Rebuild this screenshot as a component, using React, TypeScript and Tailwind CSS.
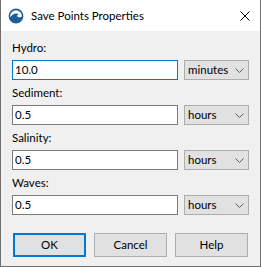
import { useState } from "react";

const FONT = { fontFamily: '"Segoe UI", Lato, "Liberation Sans", Arial, sans-serif' };

const ROWS = [
  { label: "Hydro:", value: "10.0", unit: "minutes", focused: true },
  { label: "Sediment:", value: "0.5", unit: "hours", focused: false },
  { label: "Salinity:", value: "0.5", unit: "hours", focused: false },
  { label: "Waves:", value: "0.5", unit: "hours", focused: false },
];

function AppIcon() {
  return (
    <svg width="16" height="16" viewBox="0 0 16 16">
      <circle cx="8" cy="8" r="6.6" fill="#ffffff" stroke="#1b5e9c" strokeWidth="1.6" />
      <path
        d="M1.8 10.2 C3.6 6.4 7.6 4.6 11 6.2 C9.2 6.4 8.4 8.2 10.2 9 C11.8 9.6 13.4 9 14.4 8.2 L14.2 10.4 A6.6 6.6 0 0 1 1.8 10.2 Z"
        fill="#1b5e9c"
      />
    </svg>
  );
}

function Chevron() {
  return (
    <svg width="9" height="5" viewBox="0 0 9 5" className="shrink-0">
      <polyline points="0.5,0.5 4.5,4.5 8.5,0.5" fill="none" stroke="#5a5a5a" strokeWidth="1" />
    </svg>
  );
}

function Row({ label, value, unit, focused }: (typeof ROWS)[number]) {
  const [text, setText] = useState(value);
  return (
    <div className="flex flex-col gap-[5px]">
      <div className="h-[15px] leading-[15px] text-[11.5px] text-black">{label}</div>
      <div className="flex gap-[6px]">
        <div
          className={`w-[166px] h-[20px] bg-white border flex items-center pl-[2px] ${
            focused ? "border-[#0078d7]" : "border-[#7a7a7a]"
          }`}
        >
          <input
            value={text}
            autoFocus={focused}
            onChange={(e) => setText(e.target.value)}
            className="w-full bg-transparent outline-none text-[11.5px] text-black leading-[18px] caret-black"
            style={FONT}
          />
        </div>
        <div className="w-[65px] h-[20px] bg-[#e1e1e1] border border-[#adadad] flex items-center justify-between pl-[3px] pr-[4px]">
          <span className="text-[11.5px] text-black leading-[18px]">{unit}</span>
          <Chevron />
        </div>
      </div>
    </div>
  );
}

export default function App() {
  return (
    <div
      className="w-[261px] h-[267px] flex flex-col border-x border-b border-[#6f6f6f] bg-[#f0f0f0] overflow-hidden"
      style={FONT}
    >
      {/* Title bar */}
      <div className="h-[31px] bg-white flex items-center shrink-0">
        <div className="ml-[7px] mt-[1px]">
          <AppIcon />
        </div>
        <span className="ml-[7px] text-[11.5px] text-black">Save Points Properties</span>
        <svg width="10" height="10" viewBox="0 0 10 10" className="ml-auto mr-[10px]">
          <path d="M0.5 0.5 L9.5 9.5 M9.5 0.5 L0.5 9.5" stroke="#000" strokeWidth="1" />
        </svg>
      </div>

      {/* Body */}
      <div className="flex-1 flex flex-col gap-[5px] pl-[11px] pt-[9px]">
        {ROWS.map((r) => (
          <Row key={r.label} {...r} />
        ))}

        <div className="flex gap-[8px] mt-[13px] pl-[1px]">
          <button className="w-[73px] h-[24px] bg-[#e1e1e1] border-2 border-[#0078d7] text-[11.5px] text-black">
            OK
          </button>
          <button className="w-[73px] h-[24px] bg-[#e1e1e1] border border-[#adadad] text-[11.5px] text-black">
            Cancel
          </button>
          <button className="w-[73px] h-[24px] bg-[#e1e1e1] border border-[#adadad] text-[11.5px] text-black">
            Help
          </button>
        </div>
      </div>
    </div>
  );
}
